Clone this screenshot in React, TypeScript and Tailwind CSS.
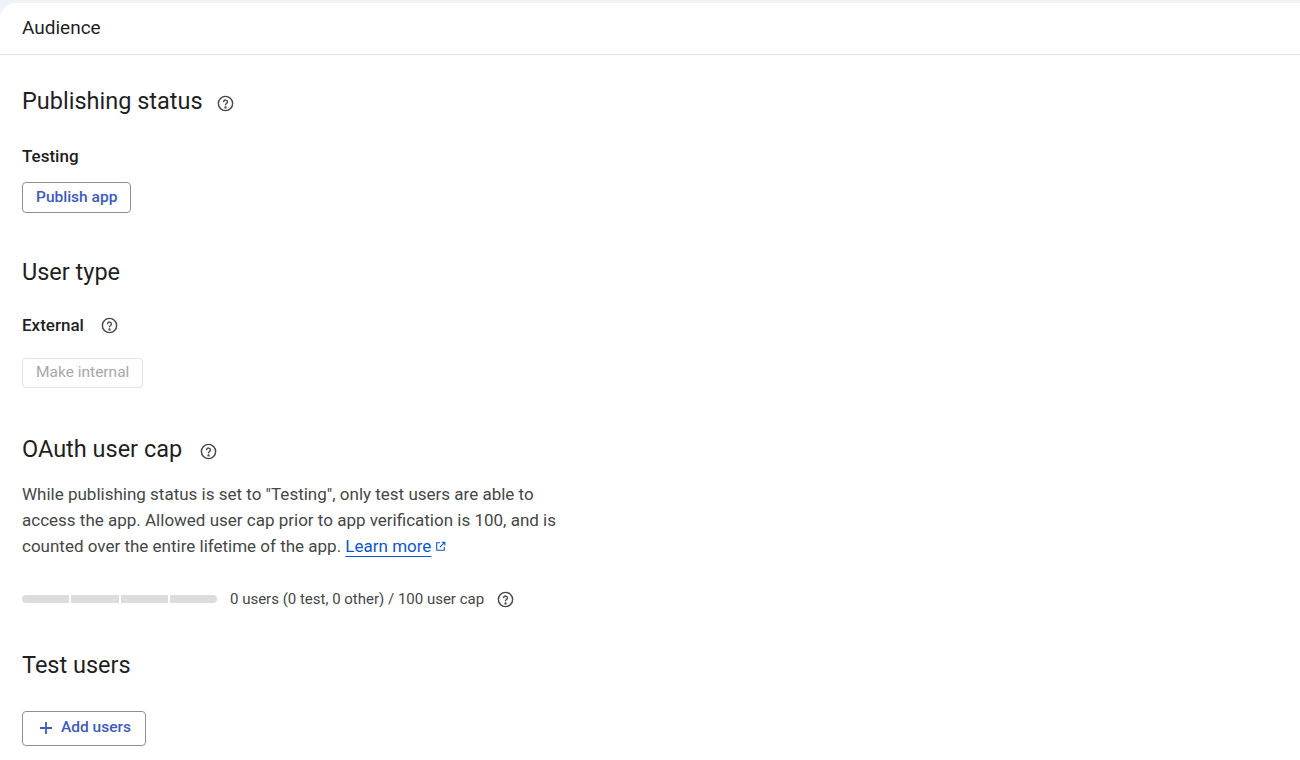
import { type JSX } from 'react';

function HelpIcon({ className = '' }: { className?: string }): JSX.Element {
  return (
    <svg viewBox="0 0 24 24" className={`h-[19px] w-[19px] text-[#444746] ${className}`} fill="none" stroke="currentColor" strokeWidth="1.8">
      <circle cx="12" cy="12" r="9" />
      <path d="M9.6 9.5a2.5 2.5 0 0 1 4.9.6c0 1.7-2.5 2-2.5 3.6" strokeLinecap="round" />
      <circle cx="12" cy="16.9" r="0.6" fill="currentColor" />
    </svg>
  );
}

export default function App(): JSX.Element {
  return (
    <div className="h-[760px] w-[1300px] bg-[#eef2f9] pt-[3px] text-[#1f1f1f]" style={{ fontFamily: 'Roboto, "Noto Sans", sans-serif' }}>
      <div className="h-full rounded-tl-[16px] bg-white">
        <div className="flex h-[52px] items-center border-b border-[#e3e3e3] px-[22px] text-[19px]">Audience</div>
        <div className="px-[22px]">
          <div className="mt-[29px] flex items-center gap-[13px] text-[23.5px]">
            Publishing status <HelpIcon className="mt-[4px]" />
          </div>
          <div className="mt-[25px] text-[17px] font-medium">Testing</div>
          <button type="button" className="mt-[12px] h-[31px] rounded-[4px] border border-[#8e918f] px-[13px] text-[15.5px] font-medium text-[#3b5bbf]">
            Publish app
          </button>
          <div className="mt-[42px] text-[23.5px]">User type</div>
          <div className="mt-[23px] flex items-center gap-[16px] text-[17px] font-medium">
            External <HelpIcon />
          </div>
          <button type="button" className="mt-[19px] h-[30px] rounded-[4px] border border-[#e3e3e3] px-[13px] text-[15.5px] text-[#a8a8a8]">
            Make internal
          </button>
          <div className="mt-[44px] flex items-center gap-[17px] text-[23.5px]">
            OAuth user cap <HelpIcon className="mt-[4px]" />
          </div>
          <p className="mt-[14px] w-[552px] text-[17px] leading-[26px] text-[#444746]">
            While publishing status is set to "Testing", only test users are able to access the app. Allowed user cap prior to app verification is 100, and is counted over the entire lifetime of the app.{' '}
            <a className="text-[#0b57d0] underline underline-offset-4">Learn more</a>
            <svg viewBox="0 0 24 24" className="ml-[3px] inline h-[13px] w-[13px] align-[-1px] text-[#0b57d0]" fill="none" stroke="currentColor" strokeWidth="2">
              <path d="M19 13v6H5V5h6M14 4h6v6M20 4l-9 9" />
            </svg>
          </p>
          <div className="mt-[29px] flex items-center">
            <div className="flex h-[8px] w-[195px] gap-[2px]">
              <div className="flex-1 rounded-l-full bg-[#dcdcdc]" />
              <div className="flex-1 bg-[#dcdcdc]" />
              <div className="flex-1 bg-[#dcdcdc]" />
              <div className="flex-1 rounded-r-full bg-[#dcdcdc]" />
            </div>
            <span className="ml-[13px] text-[15px] text-[#444746]">0 users (0 test, 0 other) / 100 user cap</span>
            <HelpIcon className="ml-[12px]" />
          </div>
          <div className="mt-[38px] text-[23.5px]">Test users</div>
          <button type="button" className="mt-[27px] flex h-[35px] items-center gap-[6px] rounded-[4px] border border-[#8e918f] px-[14px] text-[15.5px] font-medium text-[#3b5bbf]">
            <svg viewBox="0 0 24 24" className="h-[18px] w-[18px]" fill="none" stroke="currentColor" strokeWidth="2.4">
              <path d="M12 4v16M4 12h16" />
            </svg>
            Add users
          </button>
        </div>
      </div>
    </div>
  );
}
